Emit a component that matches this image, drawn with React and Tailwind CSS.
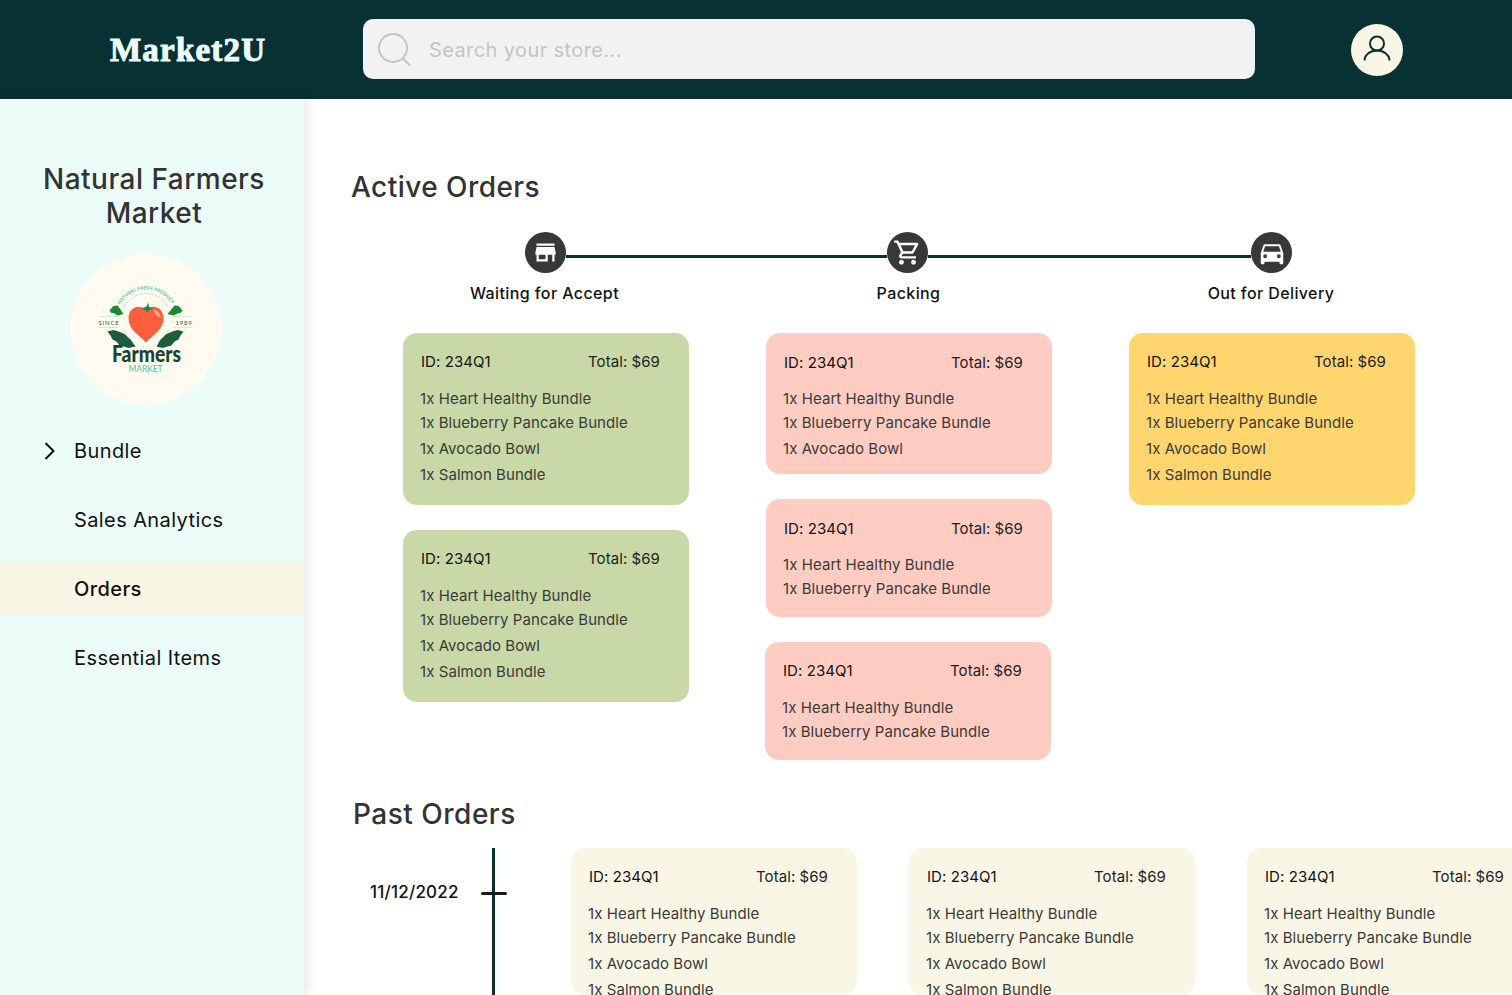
import React from "react";
import { MdStore, MdOutlineShoppingCart, MdDirectionsCar } from "react-icons/md";

const ITEMS = ["1x Heart Healthy Bundle", "1x Blueberry Pancake Bundle", "1x Avocado Bowl", "1x Salmon Bundle"];

const OrderCard = ({ color, count = 4, pb = "pb-[20px]", lowId = false, className = "" }) => {
  return (
    <div
      className={`w-[286px] shrink-0 rounded-[14px] px-[18px] ${lowId ? "pt-[20px]" : "pt-[19px]"} ${pb} ${color} ${className}`}
    >
      <div className="flex justify-between pr-[11px] text-[15px] leading-[20px] tracking-[0.07px] text-[#111]">
        <span>ID: 234Q1</span>
        <span className="text-[#222]">Total: $69</span>
      </div>
      <ul
        className={`-ml-px text-[15px] leading-[20px] tracking-[0.07px] text-[#3a3a3a] ${lowId ? "mt-[16px]" : "mt-[17px]"}`}
      >
        {ITEMS.slice(0, count).map((item, i) => (
          <li key={item} className={i === 0 ? "" : i === 1 ? "mt-[4px]" : "mt-[6px]"}>
            {item}
          </li>
        ))}
      </ul>
    </div>
  );
};

const StepIcon = ({ children }) => (
  <div className="flex h-[41px] w-[41px] shrink-0 items-center justify-center rounded-full bg-[#383838] text-white">
    {children}
  </div>
);

// coordinates in the viewBox are the ones of the page, the svg sits centered in the circle
const FarmersLogo = () => (
  <svg width="110" height="100" viewBox="90.5 279.5 110 100" fill="none">
    <path id="arc" d="M119.5 304 A30 30 0 0 1 171.5 304" stroke="none" />
    <text fontSize="4.6" fill="#4cc3a4" fontFamily="Lato, sans-serif" fontWeight="700">
      <textPath href="#arc" textLength="62">
        NATURAL FRESH PRODUCT
      </textPath>
    </text>
    <path d="M123 307 A25 25 0 0 1 168 307M122 328 A25 25 0 0 0 127 335M169 328 A25 25 0 0 1 164 335" stroke="#a8e3d2" strokeWidth="0.7" />
    <path d="M99 316H119M99 327H119M172 316H192M172 327H192" stroke="#cfe0d4" strokeWidth="0.7" />
    <text x="98" y="324.5" fontSize="6" fill="#33584a" fontFamily="Lato, sans-serif" letterSpacing="0.8">
      SINCE
    </text>
    <text x="175" y="324.5" fontSize="6" fill="#33584a" fontFamily="Lato, sans-serif" letterSpacing="0.8">
      1989
    </text>
    <path
      d="M145.5 342 C138 334 128 329 128 318 C128 306 140 303 145.5 310 C151 303 163 306 163 318 C163 329 153 334 145.5 342Z"
      fill="#fb5f3c"
    />
    <path d="M153 309.5 C157 310 160 313 160 317.5 C157 316 154 313 153 309.5Z" fill="#ffb4a0" />
    <path d="M141 308 L146 306 L148 302 L148.5 306.5 L153 307.5 L148 310 L147 312.5 L145.5 310Z" fill="#1f8a4c" />
    <path d="M109 310 L113 305.5 L117 305 L119 307.5 L123 313.5 L117 315 L114 313 L111 312.5Z" fill="#178a33" />
    <path d="M182 310 L178 305.5 L174 305 L172 307.5 L167 313.5 L173 315 L177 313 L180 312.5Z" fill="#178a33" />
    <path d="M107 331 L113 329.5 L118 331 L124 333.5 L130 339 L135 346 L128 347.5 L123 346 L119 345 L116 341 L112 339 L110 335Z" fill="#1d5c3c" />
    <path d="M183 331 L177 329.5 L172 331 L166 333.5 L160 339 L156 346 L162 347.5 L167 346 L171 345 L174 341 L178 339 L180 335Z" fill="#1d5c3c" />
    <text
      x="111.5"
      y="361"
      fontSize="23"
      fontWeight="900"
      fill="#12442e"
      fontFamily="Lato, sans-serif"
      textLength="69"
      lengthAdjust="spacingAndGlyphs"
    >
      Farmers
    </text>
    <text
      x="128"
      y="371"
      fontSize="9"
      fill="#3cc4a0"
      fontFamily="Lato, sans-serif"
      textLength="34"
      lengthAdjust="spacingAndGlyphs"
    >
      MARKET
    </text>
  </svg>
);

const NAV = ["Bundle", "Sales Analytics", "Orders", "Essential Items"];

const Sidebar = () => {
  return (
    <aside className="z-10 w-[304px] shrink-0 bg-[#ebfcf9] pt-[63px] shadow-[4px_0_10px_rgba(0,0,0,0.1)]">
      <h2 className="pl-[4px] text-center text-[28px] font-medium leading-[34px] tracking-[0.47px] text-[#333]">
        Natural Farmers
        <br />
        Market
      </h2>
      <div className="ml-[70px] mt-[24px] flex h-[151px] w-[151px] items-center justify-center rounded-full bg-[#fffbf0]">
        <FarmersLogo />
      </div>
      <nav className="mt-[18px] flex flex-col gap-[14px]">
        {NAV.map((name) => (
          <div
            key={name}
            className={`flex h-[55px] items-center pl-[74px] text-[20px] tracking-[0.4px] text-[#111] ${
              name === "Orders" ? "bg-[#f9f6e5] font-medium" : ""
            }`}
          >
            {name === "Bundle" && (
              <svg className="-ml-[30px] mr-[18px]" width="12" height="18" viewBox="0 0 12 18" fill="none">
                <path d="M1.5 1L9.5 9L1.5 17" stroke="#111" strokeWidth="2" />
              </svg>
            )}
            {name}
          </div>
        ))}
      </nav>
    </aside>
  );
};

export default function App() {
  return (
    <div className="flex h-[995px] w-[1512px] flex-col overflow-hidden bg-white font-['Inter',sans-serif]">
      <header className="flex h-[99px] shrink-0 items-center bg-[#083134]">
        <div className="ml-[110px] mt-[2px] w-[253px] font-['Liberation_Serif',serif] text-[33px] font-bold leading-none tracking-[1.2px] text-[#ebfcf9] [-webkit-text-stroke:1px_#ebfcf9]">
          Market2U
        </div>
        <div className="-mt-[1px] flex h-[60px] w-[892px] items-center rounded-[10px] bg-[#f2f2f2] pl-[14px]">
          <svg width="36" height="36" viewBox="0 0 36 36" fill="none">
            <circle cx="16" cy="17" r="14" stroke="#c4c4c4" strokeWidth="2" />
            <path d="M26 27.5L33 34.5" stroke="#c4c4c4" strokeWidth="2" />
          </svg>
          <span className="ml-[16px] mt-[2px] text-[20px] tracking-[0.4px] text-[#c4c4c4]">Search your store...</span>
        </div>
        <div className="ml-[96px] flex h-[52px] w-[52px] items-center justify-center rounded-full bg-[#f9f6e5]">
          <svg width="30" height="30" viewBox="0 0 30 30" fill="none">
            <circle cx="15" cy="8.5" r="7" stroke="#083134" strokeWidth="2" />
            <path d="M2.5 25.5C2.5 20 8 15.5 15 15.5C22 15.5 27.5 20 27.5 25.5" stroke="#083134" strokeWidth="2" />
          </svg>
        </div>
      </header>

      <div className="flex min-h-0 flex-1">
        <Sidebar />
        <main className="min-w-0 flex-1 pl-[48px] pt-[71px]">
          <h1 className="-ml-px text-[28px] font-medium leading-[34px] tracking-[0.45px] text-[#333]">Active Orders</h1>

          <div className="ml-[173px] mt-[28px] flex items-center">
            <StepIcon>
              <MdStore size={27} />
            </StepIcon>
            <div className="mt-[8px] h-[3px] w-[321px] bg-[#083134]" />
            <StepIcon>
              <MdOutlineShoppingCart size={29} />
            </StepIcon>
            <div className="mt-[8px] h-[3px] w-[323px] bg-[#083134]" />
            <StepIcon>
              <MdDirectionsCar size={30} />
            </StepIcon>
          </div>

          <div className="ml-[51px] mt-[10px] flex gap-[77px] text-center text-[16px] font-medium leading-[20px] tracking-[0.4px] text-[#111]">
            <div className="w-[286px] pr-[3px]">Waiting for Accept</div>
            <div className="w-[286px] pr-[1px]">Packing</div>
            <div className="w-[286px] pr-[2px]">Out for Delivery</div>
          </div>

          <div className="ml-[51px] mt-[30px] flex h-[427px] gap-[77px]">
            <div className="flex flex-col gap-[25px]">
              <OrderCard color="bg-[#c8d9a7]" />
              <OrderCard color="bg-[#c8d9a7]" />
            </div>
            <div className="flex flex-col gap-[25px]">
              <OrderCard color="bg-[#ffccc2]" count={3} pb="pb-[15px]" lowId />
              <OrderCard color="bg-[#ffccc2]" count={2} pb="pb-[18px]" lowId />
              <OrderCard color="bg-[#ffccc2]" count={2} pb="pb-[18px]" className="-ml-px" />
            </div>
            <div>
              <OrderCard color="bg-[#ffd66e]" />
            </div>
          </div>

          <h1 className="ml-px mt-[37px] text-[28px] font-medium leading-[34px] tracking-[0.5px] text-[#333]">
            Past Orders
          </h1>

          <div className="mt-[17px] flex h-[147px]">
            <div className="ml-[18px] w-[122px] shrink-0 pt-[34px] text-[17px] font-medium leading-[20px] tracking-[0.2px] text-[#111]">
              11/12/2022
            </div>
            <div className="relative h-full w-[3px] shrink-0 bg-[#083134]">
              <div className="absolute left-[-11px] top-[44px] h-[3px] w-[26px] rounded-full bg-[#1a1a1a]" />
            </div>
            <div className="ml-[76px] flex gap-[52px]">
              <OrderCard color="bg-[#f9f6e5]" />
              <OrderCard color="bg-[#f9f6e5]" />
              <OrderCard color="bg-[#f9f6e5]" />
            </div>
          </div>
        </main>
      </div>
    </div>
  );
}
